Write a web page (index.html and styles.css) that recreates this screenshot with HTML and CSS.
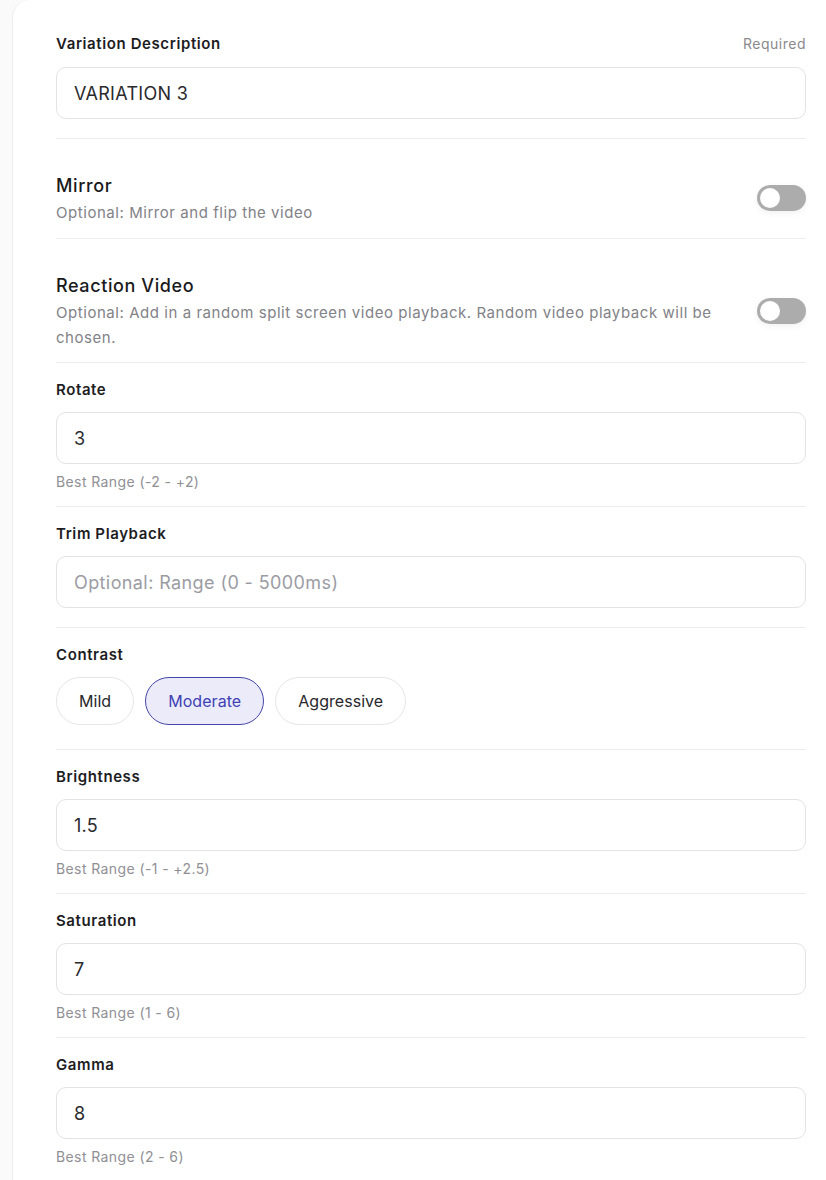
FILE: index.html
```html
<!DOCTYPE html>
<html lang="en">
<head>
<meta charset="utf-8">
<title>Variation</title>
<link rel="stylesheet" href="styles.css">
</head>
<body>
<div class="page">
  <div class="card">
    <section class="field first">
      <div class="label-row">
        <span class="label">Variation Description</span>
        <span class="required">Required</span>
      </div>
      <div class="input">VARIATION 3</div>
    </section>

    <section class="toggle-row">
      <div class="toggle-text">
        <div class="toggle-title">Mirror</div>
        <div class="toggle-desc">Optional: Mirror and flip the video</div>
      </div>
      <div class="switch"><span class="knob"></span></div>
    </section>

    <section class="toggle-row two-line">
      <div class="toggle-text">
        <div class="toggle-title">Reaction Video</div>
        <div class="toggle-desc">Optional: Add in a random split screen video playback. Random video playback will be chosen.</div>
      </div>
      <div class="switch"><span class="knob"></span></div>
    </section>

    <section class="field">
      <div class="label">Rotate</div>
      <div class="input">3</div>
      <div class="hint">Best Range (-2 - +2)</div>
    </section>

    <section class="field nohint">
      <div class="label">Trim Playback</div>
      <div class="input placeholder">Optional: Range (0 - 5000ms)</div>
    </section>

    <section class="field pills-field">
      <div class="label">Contrast</div>
      <div class="pills">
        <span class="pill">Mild</span>
        <span class="pill active">Moderate</span>
        <span class="pill">Aggressive</span>
      </div>
    </section>

    <section class="field">
      <div class="label">Brightness</div>
      <div class="input">1.5</div>
      <div class="hint">Best Range (-1 - +2.5)</div>
    </section>

    <section class="field">
      <div class="label">Saturation</div>
      <div class="input">7</div>
      <div class="hint">Best Range (1 - 6)</div>
    </section>

    <section class="field last">
      <div class="label">Gamma</div>
      <div class="input">8</div>
      <div class="hint">Best Range (2 - 6)</div>
    </section>
  </div>
</div>
</body>
</html>
```

FILE: styles.css
```css
html, body {
  margin: 0;
  padding: 0;
}
body {
  background: #fafafa;
  font-family: Inter, "Noto Sans", sans-serif;
  color: #1c1c1e;
  overflow: hidden;
}
.page {
  padding-left: 12px;
}
.card {
  background: #fff;
  border-left: 1px solid #ececec;
  border-top-left-radius: 18px;
  padding: 0 20px 0 43px;
  min-height: 1180px;
}
.field,
.toggle-row {
  border-top: 1px solid #ededed;
}
.field {
  padding: 17px 0 16px;
}
.field.first {
  border-top: none;
  padding-top: 34px;
  padding-bottom: 19px;
}
.field.nohint {
  padding-bottom: 19px;
}
.label-row {
  display: flex;
  justify-content: space-between;
  align-items: center;
}
.label {
  font-size: 15px;
  font-weight: 600;
  line-height: 20px;
  letter-spacing: 0.6px;
  color: #1d1d1f;
}
.required {
  font-size: 14px;
  color: #8a8a8e;
  line-height: 20px;
  letter-spacing: 0.5px;
}
.input {
  margin-top: 12px;
  height: 50px;
  border: 1px solid #e3e3e6;
  border-radius: 10px;
  padding: 0 17px;
  display: flex;
  align-items: center;
  font-size: 18px;
  letter-spacing: 0.3px;
  color: #2a2a2d;
}
.field.first .input {
  margin-top: 13px;
}
.input.placeholder {
  color: #9b9ca3;
  letter-spacing: 0.4px;
}
.hint {
  margin-top: 10px;
  font-size: 14px;
  line-height: 16px;
  letter-spacing: 0.4px;
  color: #8f8f94;
}
.toggle-row {
  display: flex;
  align-items: center;
  justify-content: space-between;
  gap: 30px;
  padding: 35px 0 13px;
}
.toggle-row.two-line {
  padding-bottom: 12px;
}
.toggle-title {
  font-size: 18px;
  font-weight: 500;
  line-height: 24px;
  letter-spacing: 0.6px;
  color: #1a1a1c;
}
.toggle-desc {
  margin-top: 2px;
  font-size: 15px;
  line-height: 25px;
  color: #828287;
  letter-spacing: 0.55px;
}
.switch {
  flex: none;
  width: 49px;
  height: 26px;
  margin-bottom: 3px;
  border-radius: 13px;
  background: #acacac;
  position: relative;
  box-shadow: 0 2px 6px rgba(0,0,0,0.06);
}
.knob {
  position: absolute;
  left: 3px;
  top: 3px;
  width: 20px;
  height: 20px;
  border-radius: 50%;
  background: #fff;
}
.pills-field {
  padding-bottom: 24px;
}
.pills {
  margin-top: 12px;
  display: flex;
  gap: 11px;
}
.pill {
  height: 46px;
  border: 1px solid #e6e6e8;
  border-radius: 24px;
  padding: 0 22px;
  display: flex;
  align-items: center;
  font-size: 16px;
  letter-spacing: 0.05px;
  color: #28282b;
}
.pill.active {
  background: #ebebfa;
  border-color: #4547a8;
  color: #3e41b5;
}
```
